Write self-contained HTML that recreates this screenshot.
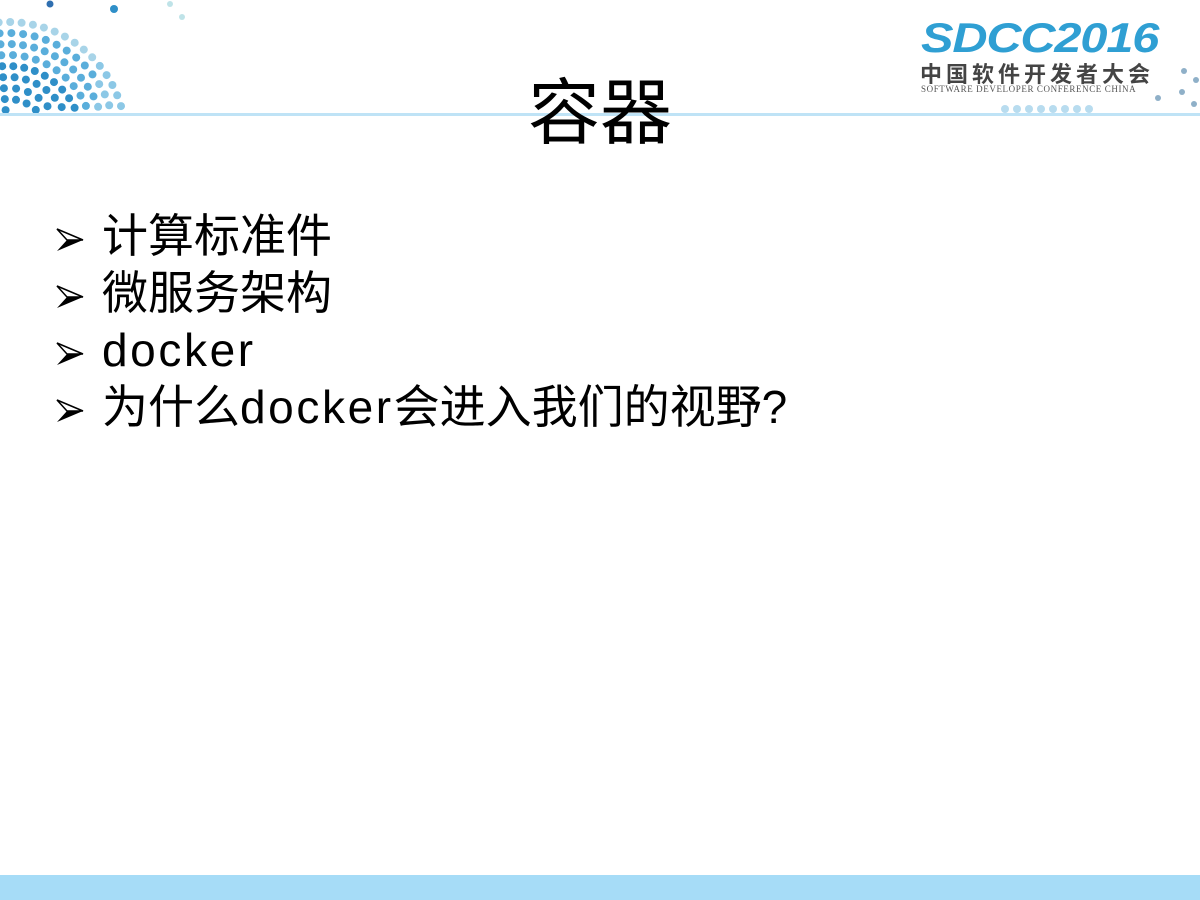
<!DOCTYPE html>
<html><head><meta charset="utf-8"><style>
body{margin:0;width:1200px;height:900px;position:relative;background:#fff;overflow:hidden;font-family:"Liberation Sans","Noto Sans CJK SC",sans-serif;}
.line{position:absolute;left:0;top:113px;width:1200px;height:3px;background:#bfe3f6;}
.bot{position:absolute;left:0;top:875px;width:1200px;height:25px;background:#a6dcf7;}
.title{position:absolute;left:0;width:1200px;top:72px;text-align:center;font-size:72px;line-height:84px;color:#000;}
.items{position:absolute;left:55px;top:208px;font-size:46px;line-height:57px;color:#000;}
.items div{white-space:nowrap}
.l{letter-spacing:2.6px}
.arr{display:inline-block;width:30px;margin-right:17px;vertical-align:middle;}
.logo1{position:absolute;left:921px;top:14px;font:italic bold 42px "Liberation Sans",sans-serif;color:#2f9fd3;letter-spacing:-1px;transform:scaleX(1.16);transform-origin:0 0;}
.logo2{position:absolute;left:920px;top:57px;font-size:22px;font-weight:bold;color:#444;letter-spacing:4px;font-family:"Noto Sans CJK SC",sans-serif;}
.logo3{position:absolute;left:921px;top:84px;font-size:9px;color:#555;letter-spacing:0.6px;font-family:"Liberation Serif",serif;}
</style></head><body>
<svg id="dots" width="200" height="120" style="position:absolute;left:0;top:0"></svg>
<svg id="dots2" width="240" height="120" style="position:absolute;left:960px;top:0"></svg>
<div class="line"></div>
<div class="logo1">SDCC2016</div>
<div class="logo2">中国软件开发者大会</div>
<div class="logo3">SOFTWARE DEVELOPER CONFERENCE CHINA</div>
<div class="title">容器</div>
<div class="items">
<div><svg class="arr" viewBox="0 0 30 30"><path d="M2 4 L28 15 L2 26 L12 15 Z" fill="#000"/><path d="M2 4 L28 15 L12 15 Z" fill="#fff" stroke="#000" stroke-width="1.5"/></svg>计算标准件</div>
<div><svg class="arr" viewBox="0 0 30 30"><path d="M2 4 L28 15 L2 26 L12 15 Z" fill="#000"/><path d="M2 4 L28 15 L12 15 Z" fill="#fff" stroke="#000" stroke-width="1.5"/></svg>微服务架构</div>
<div><svg class="arr" viewBox="0 0 30 30"><path d="M2 4 L28 15 L2 26 L12 15 Z" fill="#000"/><path d="M2 4 L28 15 L12 15 Z" fill="#fff" stroke="#000" stroke-width="1.5"/></svg><span class="l">docker</span></div>
<div><svg class="arr" viewBox="0 0 30 30"><path d="M2 4 L28 15 L2 26 L12 15 Z" fill="#000"/><path d="M2 4 L28 15 L12 15 Z" fill="#fff" stroke="#000" stroke-width="1.5"/></svg>为什么<span class="l">docker</span>会进入我们的视野?</div>
</div>
<div class="bot"></div>
<script>
var s=document.getElementById('dots'),h='';
var cx=8,cy=140;
for(var r=30;r<=125;r+=11){
 var n=Math.round(Math.PI/2*r/11);
 for(var i=0;i<=n;i++){
  var a=(i/n)*Math.PI/2*1.05;
  var x=cx+r*Math.cos(a), y=cy-r*Math.sin(a);
  if(y>111||x<-4||y<-4)continue;
  var c=r>110?'#a8d4e8':(r>75?'#5aaedb':'#2f8fc8');
  if(x>95)c='#8cc8e6';
  h+='<circle cx="'+x.toFixed(1)+'" cy="'+y.toFixed(1)+'" r="4" fill="'+c+'"/>';
 }
}
h+='<circle cx="114" cy="9" r="4" fill="#2f8fc8"/><circle cx="170" cy="4" r="3" fill="#bfe3e8"/><circle cx="182" cy="17" r="3" fill="#bfe3e8"/><circle cx="50" cy="4" r="3.5" fill="#2f6fb0"/>';
s.innerHTML=h;
var s2=document.getElementById('dots2'),g='';
for(var i=0;i<8;i++)g+='<circle cx="'+(45+i*12)+'" cy="109" r="4" fill="#b8dcef"/>';
g+='<circle cx="224" cy="71" r="3" fill="#8fb0c8"/><circle cx="236" cy="80" r="3" fill="#8fb0c8"/><circle cx="222" cy="92" r="3" fill="#8fb0c8"/><circle cx="234" cy="104" r="3" fill="#8fb0c8"/><circle cx="198" cy="98" r="3" fill="#8fb0c8"/>';
s2.innerHTML=g;
</script>
</body></html>
